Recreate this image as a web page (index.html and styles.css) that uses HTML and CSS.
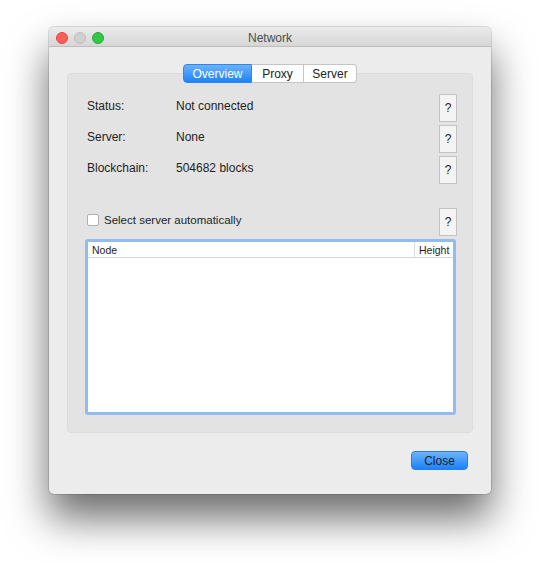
FILE: index.html
```html
<!DOCTYPE html>
<html lang="en">
<head>
    <meta charset="UTF-8">
    <title>Network</title>
    <link rel="stylesheet" href="styles.css">
</head>
<body>

<div class="window">
    <div class="titlebar">
        <div class="lights">
            <span class="light red"></span>
            <span class="light off"></span>
            <span class="light green"></span>
        </div>
        <div class="title">Network</div>
    </div>

    <div class="content">
        <div class="tabs">
            <span class="tab active">Overview</span>
            <span class="tab">Proxy</span>
            <span class="tab">Server</span>
        </div>

        <div class="group">
            <div class="row">
                <span class="label">Status:</span>
                <span class="value">Not connected</span>
                <button class="help">?</button>
            </div>
            <div class="row">
                <span class="label">Server:</span>
                <span class="value">None</span>
                <button class="help">?</button>
            </div>
            <div class="row">
                <span class="label">Blockchain:</span>
                <span class="value">504682 blocks</span>
                <button class="help">?</button>
            </div>

            <div class="row auto">
                <label class="check">
                    <span class="box"></span>
                    Select server automatically
                </label>
                <button class="help">?</button>
            </div>

            <div class="list">
                <div class="list-head">
                    <span class="col-node">Node</span>
                    <span class="col-height">Height</span>
                </div>
                <div class="list-body"></div>
            </div>
        </div>

        <div class="footer">
            <button class="close">Close</button>
        </div>
    </div>
</div>

</body>
</html>
```

FILE: styles.css
```css
html, body {
    margin: 0;
    min-height: 565px;
    background: #ffffff;
}
body {
    padding-top: 27px;
    box-sizing: border-box;
    font-family: "Liberation Sans", Arial, sans-serif;
    font-size: 12px;
    color: #1e1e1e;
}
.window {
    margin-left: 49px;
    width: 442px;
    height: 467px;
    background: #ececec;
    border-radius: 5px;
    box-shadow: 0 0 0 1px rgba(0,0,0,0.12), 0 24px 40px rgba(0,0,0,0.58);
    overflow: hidden;
}
.titlebar {
    height: 20px;
    padding-top: 2px;
    box-sizing: border-box;
    background: linear-gradient(#ebebeb, #d6d6d6);
    border-bottom: 1px solid #bdbdbd;
    display: flex;
    align-items: center;
    position: relative;
}
.lights {
    display: flex;
    gap: 6px;
    padding-left: 7px;
}
.light {
    width: 12px;
    height: 12px;
    border-radius: 50%;
    box-sizing: border-box;
}
.red {
    background: #fc5f57;
    border: 1px solid #e14640;
}
.off {
    background: #d0d0d0;
    border: 1px solid #bdbdbd;
}
.green {
    background: #33c748;
    border: 1px solid #27aa35;
}
.title {
    position: absolute;
    left: 0;
    right: 0;
    text-align: center;
    color: #4d4d4d;
    font-size: 12px;
}
.content {
    padding: 17px 18px 0 18px;
}
.tabs {
    display: flex;
    justify-content: center;
    position: relative;
    z-index: 1;
}
.tab {
    height: 17px;
    line-height: 18px;
    background: #ffffff;
    border: 1px solid #c4c4c4;
    border-left: none;
    font-size: 12px;
    color: #222;
    text-align: center;
}
.tab:nth-child(1) { width: 67px; border-left: 1px solid #c4c4c4; border-radius: 4px 0 0 4px; }
.tab:nth-child(2) { width: 51px; }
.tab:nth-child(3) { width: 52px; border-radius: 0 4px 4px 0; }
.tab.active {
    background: linear-gradient(#6bb3fa, #1b83fb);
    border-color: #2f86ef;
    color: #ffffff;
}
.group {
    margin-top: -10px;
    height: 360px;
    box-sizing: border-box;
    background: #e3e3e3;
    border: 1px solid #dcdcdc;
    border-radius: 4px;
    padding: 20px 15px 0 19px;
}
.row {
    display: flex;
    align-items: flex-start;
    height: 28px;
    margin-bottom: 3px;
}
.label {
    width: 89px;
    padding-top: 5px;
}
.value {
    flex: 1;
    padding-top: 5px;
}
.help {
    margin-left: auto;
    width: 18px;
    height: 28px;
    padding: 0;
    background: #f4f4f4;
    border: 1px solid #c3c3c3;
    font-family: "Liberation Sans", Arial, sans-serif;
    font-size: 12px;
    color: #222;
}
.row.auto {
    margin-top: 24px;
    margin-bottom: 3px;
}
.check {
    display: flex;
    align-items: center;
    gap: 5px;
    padding-top: 6px;
    font-size: 11.5px;
}
.box {
    width: 12px;
    height: 12px;
    box-sizing: border-box;
    background: #ffffff;
    border: 1px solid #b0b0b0;
    border-radius: 2px;
}
.list {
    margin: 0 1px 0 -2px;
    height: 176px;
    box-sizing: border-box;
    border: 3px solid #92bbef;
    border-radius: 3px;
    background: #ffffff;
}
.list-head {
    display: flex;
    height: 15px;
    border-bottom: 1px solid #d4d4d4;
    font-size: 10.5px;
    line-height: 16px;
}
.col-node {
    flex: 1;
    padding-left: 4px;
}
.col-height {
    width: 34px;
    padding-left: 4px;
    border-left: 1px solid #dcdcdc;
}
.footer {
    display: flex;
    justify-content: flex-end;
    padding: 18px 5px 0 0;
}
.close {
    width: 57px;
    height: 19px;
    padding: 0;
    background: linear-gradient(#6cb4fb, #1b82fb);
    border: 1px solid #2b7de6;
    border-radius: 4px;
    font-family: "Liberation Sans", Arial, sans-serif;
    font-size: 12px;
    color: #1b1b1b;
}
```
